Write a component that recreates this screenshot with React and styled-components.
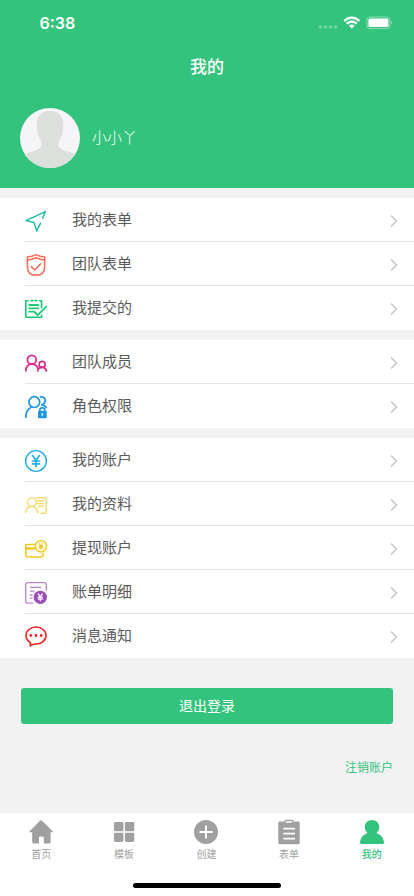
import React from "react"
import styled, { createGlobalStyle } from "styled-components"

const green = "#34c37c"

const GlobalStyle = createGlobalStyle`
*{
box-sizing:border-box;
}
body{
margin:0;
background-color:#f2f2f2;
font-family:"Noto Sans CJK SC", "Liberation Sans", sans-serif;
}
`
const Screen = styled.div`
display:flex;
flex-direction:column;
width:100%;
height:896px;
overflow:hidden;
background-color:#f2f2f2;
`
const Header = styled.header`
display:flex;
flex-direction:column;
height:188px;
flex-shrink:0;
color:white;
background-color:${green};
`
const StatusBar = styled.div`
display:flex;
align-items:center;
justify-content:space-between;
height:44px;
padding:2px 21px 0 39.5px;
`
const Time = styled.span`
font-family:Inter, sans-serif;
font-size:16px;
font-weight:600;
`
const Title = styled.h1`
display:flex;
align-items:center;
justify-content:center;
height:44px;
margin:0;
font-size:17px;
font-weight:500;
line-height:44px;
`
const Profile = styled.div`
display:flex;
align-items:center;
gap:12px;
height:100px;
padding-left:20px;
`
const UserName = styled.span`
margin-bottom:2px;
font-size:15px;
font-weight:300;
line-height:20px;
`
const Group = styled.section`
margin-top:10px;
flex-shrink:0;
background-color:white;
`
const Row = styled.div`
display:flex;
align-items:center;
height:44px;
margin-left:25px;
padding-right:15.5px;
border-bottom:1px solid ${props => props.$last ? "transparent" : "#e4e4e4"};
`
const RowIcon = styled.svg`
width:22px;
height:22px;
margin-top:3px;
flex-shrink:0;
overflow:visible;
fill:none;
stroke:${props => props.$color};
stroke-width:${props => props.$weight || 1.4};
stroke-linecap:round;
stroke-linejoin:round;
`
const RowLabel = styled.span`
flex:1;
margin:0 0 2px 25px;
font-size:15px;
line-height:20px;
color:#5a5a5a;
`
const Chevron = styled.svg`
width:10px;
height:14px;
margin-top:3px;
fill:none;
stroke:#c4c4c4;
stroke-width:1.4;
`
const LogoutButton = styled.button`
flex-shrink:0;
height:36px;
margin:30px 21px 0;
padding:0;
border:0;
border-radius:3px;
font-family:inherit;
font-size:14px;
line-height:34px;
padding-bottom:2px;
color:white;
background-color:${green};
`
const CancelLink = styled.a`
align-self:flex-end;
margin:33px 21px 0 0;
font-size:12px;
line-height:20px;
color:${green};
`
const TabBar = styled.nav`
display:flex;
flex-direction:column;
align-items:center;
height:84px;
margin-top:auto;
flex-shrink:0;
border-top:1px solid #ededed;
background-color:white;
`
const Tabs = styled.div`
display:grid;
grid-template-columns:repeat(5, 1fr);
width:100%;
height:70px;
padding-right:1px;
`
const Tab = styled.div`
display:flex;
flex-direction:column;
align-items:center;
padding-top:6px;
color:${props => props.$active ? green : "#a0a0a0"};
`
const TabIcon = styled.svg`
width:26px;
height:26px;
fill:currentColor;
`
const TabLabel = styled.span`
margin-top:1px;
font-size:10px;
font-weight:${props => props.$active ? 500 : 400};
line-height:16px;
`
const HomeIndicator = styled.div`
width:148px;
height:5px;
border-radius:3px;
background-color:black;
`

const Yen = ({ x, y, s }) => (
    <path
        transform={`translate(${x} ${y}) scale(${s})`}
        d="M-3.4 -5.6 L0 -0.6 L3.4 -5.6 M0 -0.6 V5.8 M-3.5 0 H3.5 M-3.5 3 H3.5"
    />
)

const Send = () => (
    <RowIcon $color="#1fbfa5" $weight="1.5" viewBox="0 0 22 22">
        <path d="M17.7 8.3 L20.3 1.6 L1 10.6 L9 12.4 L11.7 21 L15.6 13.2" />
    </RowIcon>
)
const Shield = () => (
    <RowIcon $color="#f76b57" $weight="1.5" viewBox="0 0 22 22">
        <path d="M2.4 3 Q7 2.7 11 .7 Q15 2.7 19.7 3 V12.5 C19.7 18.5 16 21.3 11 21.3 C6 21.3 2.4 18.5 2.4 12.5 Z" />
        <path d="M2.4 6.1 Q7 5.6 11 3.8 Q15 5.6 19.7 6.1 M6.3 12.6 L9.8 16 L15.7 9.7" />
    </RowIcon>
)
const Submitted = () => (
    <RowIcon $color="#1fc974" $weight="1.6" viewBox="0 0 22 22">
        <path d="M3.2 2.8 H.8 V19.3 H16.6 V17.4 M16.6 9.6 V2.8 H14.4 M6 2.6 H8 M10 2.6 H12" />
        <path strokeWidth="1.8" d="M4.2 7 H13.4 M4.2 10.3 H13.4 M4.2 13.6 H8.4 M9.4 14 L12.7 17.2 L21.3 8.7" />
    </RowIcon>
)
const Members = () => (
    <RowIcon $color="#db2a86" $weight="1.7" viewBox="0 0 22 22">
        <circle cx="6.8" cy="7.8" r="4.4" />
        <circle cx="17.1" cy="12.4" r="3" />
        <path d="M.8 19 C1 14.5 3.3 12.2 6.8 12.2 C9.8 12.2 11.8 13.6 12.7 16 M12.7 19 C13.1 16.6 14.6 15.4 17.1 15.4 C19.6 15.4 21 16.6 21.4 19" />
    </RowIcon>
)
const Roles = () => (
    <RowIcon $color="#1c97e0" $weight="1.7" viewBox="0 0 22 22">
        <circle cx="9.3" cy="6.1" r="5.4" />
        <path d="M.8 21.2 C.8 16.5 2.6 13.4 6 11.3 M15.6 .8 C18.4 .6 20.2 2.3 20.2 4.6 C20.2 6.8 18.9 8.2 16.8 8.9 M16.8 8.9 C19 9.2 20.3 10 21.2 11.3" />
        <path d="M14.9 15 V13.6 C14.9 11.2 19.7 11.2 19.7 13.6 V15" />
        <rect x="13.8" y="15.7" width="7.1" height="5.6" fill="#1c97e0" />
        <path stroke="white" strokeWidth="1.2" d="M17.3 17.6 V19.6" />
    </RowIcon>
)
const Account = () => (
    <RowIcon $color="#22adee" viewBox="0 0 22 22">
        <circle cx="11" cy="11" r="10.4" />
        <g strokeWidth="1.7"><Yen x="11" y="11" s="0.98" /></g>
    </RowIcon>
)
const Material = () => (
    <RowIcon $color="#f8d968" viewBox="0 0 22 22">
        <circle cx="6.8" cy="8.2" r="4.3" />
        <path d="M.7 18.8 C1 15 3.2 12.6 6.8 12.6 C10.4 12.6 12.6 15 12.9 18.8 M11 3.7 H20 Q21.2 3.7 21.2 5 V18 Q21.2 19.2 20 19.2 H16 M12.6 6.8 H18.3 M12.6 9.5 H18.3 M13.4 12.2 H18.3" />
    </RowIcon>
)
const Withdraw = () => (
    <RowIcon $color="#f3c91c" $weight="1.5" viewBox="0 0 22 22">
        <path d="M9 6.4 H2.2 Q.8 6.4 .8 7.8 V17.6 Q.8 19 2.2 19 H16.8 Q18.2 19 18.2 17.6 V15.6" />
        <path strokeWidth="2.3" d="M1.2 10.5 H8.8" />
        <circle cx="15.9" cy="8.3" r="5.6" />
        <g strokeWidth="2.4"><Yen x="15.9" y="8.3" s="0.5" /></g>
    </RowIcon>
)
const Bill = () => (
    <RowIcon $color="#b783cc" $weight="1.3" viewBox="0 0 22 22">
        <path d="M7.8 21.2 H2.6 Q.7 21.2 .7 19.3 V2.7 Q.7 .7 2.6 .7 H19.4 Q21.3 .7 21.3 2.7 V8 M5.4 5.4 H15.6 M5.4 9.2 H9 M5.4 13 H7 M5.4 16.4 H7" />
        <circle cx="15.3" cy="15.3" r="6" fill="#9b4fb8" stroke="#9b4fb8" />
        <g stroke="white" strokeWidth="2"><Yen x="15.3" y="15.3" s="0.6" /></g>
    </RowIcon>
)
const Message = () => (
    <RowIcon $color="#f5201f" $weight="1.6" viewBox="0 0 22 22">
        <path d="M5.2 19.8 L5.5 16.6 C2.8 15.1 1 12.6 1 9.6 C1 4.8 5.5 1 11 1 C16.5 1 21 4.8 21 9.6 C21 14.4 16.5 18 11 18 H9.4 Z" />
        <path strokeWidth="2.8" d="M5.8 9.5 H5.81 M11 9.5 H11.01 M16.2 9.5 H16.21" />
    </RowIcon>
)

const groups = [
    [
        { label: "我的表单", Icon: Send },
        { label: "团队表单", Icon: Shield },
        { label: "我提交的", Icon: Submitted },
    ],
    [
        { label: "团队成员", Icon: Members },
        { label: "角色权限", Icon: Roles },
    ],
    [
        { label: "我的账户", Icon: Account },
        { label: "我的资料", Icon: Material },
        { label: "提现账户", Icon: Withdraw },
        { label: "账单明细", Icon: Bill },
        { label: "消息通知", Icon: Message },
    ],
]

const tabs = [
    {
        label: "首页",
        icon: <path d="M12.2 1.6 Q13 .8 13.8 1.6 L24.8 12.4 Q25.2 13.2 24.4 13.3 H22.6 V23 Q22.6 24.5 21.1 24.5 H15.8 V18.2 Q15.8 17.4 15 17.4 H11.8 Q11 17.4 11 18.2 V24.5 H5.7 Q4.2 24.5 4.2 23 V13.3 H1.8 Q.9 13.2 1.4 12.4 Z" />,
    },
    {
        label: "模板",
        icon: <><rect x="3" y="3" width="9.4" height="9.3" rx="1.4" /><rect x="13.9" y="3" width="9.4" height="9.3" rx="1.4" /><rect x="3" y="13.7" width="9.4" height="9.3" rx="1.4" /><rect x="13.9" y="13.7" width="9.4" height="9.3" rx="1.4" /></>,
    },
    {
        label: "创建",
        icon: <><circle cx="13" cy="13" r="12" /><path d="M13 7.2 V18.8 M7.2 13 H18.8" stroke="white" strokeWidth="2" strokeLinecap="round" /></>,
    },
    {
        label: "表单",
        icon: <><path d="M3.6 2.4 H8.6 V1.6 Q8.6 .7 9.5 .7 H16.5 Q17.4 .7 17.4 1.6 V2.4 H22.4 Q23.7 2.4 23.7 3.7 V23.9 Q23.7 25.2 22.4 25.2 H3.6 Q2.3 25.2 2.3 23.9 V3.7 Q2.3 2.4 3.6 2.4 Z" /><path d="M9.8 3 H16.2 M7.4 9.6 H19 M7.4 14.6 H19 M7.4 19.6 H19" stroke="white" strokeWidth="1.7" /></>,
    },
    {
        label: "我的",
        active: true,
        icon: <path d="M13 .9 C17.4 .9 20.3 4.1 20.3 8 C20.3 10.6 19.2 12.6 17.4 13.9 C21.8 15.4 24.6 18.8 25 23.4 Q25.1 24.9 23.4 24.9 H2.6 Q.9 24.9 1 23.4 C1.4 18.8 4.2 15.4 8.6 13.9 C6.8 12.6 5.7 10.6 5.7 8 C5.7 4.1 8.6 .9 13 .9 Z" />,
    },
]

const StatusIcons = () => (
    <svg width="76" height="14" viewBox="0 0 76 14">
        <g fill="white" fillOpacity="0.3">
            <circle cx="3.5" cy="11" r="1.8" />
            <circle cx="8.5" cy="11" r="1.8" />
            <circle cx="13.5" cy="11" r="1.8" />
            <circle cx="18.5" cy="11" r="1.8" />
        </g>
        <g fill="none" stroke="white" strokeWidth="2.3">
            <path d="M27.2 4.8 Q34.8 -1.8 42.4 4.8" />
            <path d="M29.8 7.7 Q34.8 3.3 39.8 7.7" />
        </g>
        <path fill="white" d="M32 9.7 Q34.8 7.5 37.6 9.7 L34.8 12.5 Z" />
        <rect x="49.9" y="1" width="23" height="11.6" rx="3.2" fill="none" stroke="white" strokeOpacity="0.45" />
        <rect x="51.4" y="2.5" width="20" height="8.6" rx="1.7" fill="white" />
        <path fill="white" fillOpacity="0.5" d="M74 4.9 Q76 6.8 74 8.7 Z" />
    </svg>
)

const Avatar = () => (
    <svg width="60" height="60" viewBox="0 0 60 60">
        <clipPath id="avatar"><circle cx="30" cy="30" r="30" /></clipPath>
        <g clipPath="url(#avatar)">
            <rect width="60" height="60" fill="#f5f4f7" />
            <path fill="#dddfdd" d="M30 3 C39 3 43.6 8.5 43.4 17 C43.3 24 41 30 38.8 33.6 C37.6 38 39 40 43.4 42 C48 44 52.5 44.6 57 47 V60 H3 V47 C7.5 44.6 12 44 16.6 42 C21 40 22.4 38 21.2 33.6 C19 30 16.7 24 16.8 17 C16.8 8.5 21 3 30 3 Z" />
        </g>
    </svg>
)

export default class App extends React.Component{
render(){
    return(
        <Screen>
            <GlobalStyle />
            <Header>
                <StatusBar>
                    <Time>6:38</Time>
                    <StatusIcons />
                </StatusBar>
                <Title>我的</Title>
                <Profile>
                    <Avatar />
                    <UserName>小小丫</UserName>
                </Profile>
            </Header>
            {groups.map((rows, g) => (
                <Group key={g}>
                    {rows.map(({ label, Icon }, i) => (
                        <Row key={label} $last={i === rows.length - 1}>
                            <Icon />
                            <RowLabel>{label}</RowLabel>
                            <Chevron viewBox="0 0 10 14"><path d="M2 1.4 L7.5 7 L2 12.6" /></Chevron>
                        </Row>
                    ))}
                </Group>
            ))}
            <LogoutButton>退出登录</LogoutButton>
            <CancelLink>注销账户</CancelLink>
            <TabBar>
                <Tabs>
                    {tabs.map(tab => (
                        <Tab key={tab.label} $active={tab.active}>
                            <TabIcon viewBox="0 0 26 26">{tab.icon}</TabIcon>
                            <TabLabel $active={tab.active}>{tab.label}</TabLabel>
                        </Tab>
                    ))}
                </Tabs>
                <HomeIndicator />
            </TabBar>
        </Screen>
    )
}
}
